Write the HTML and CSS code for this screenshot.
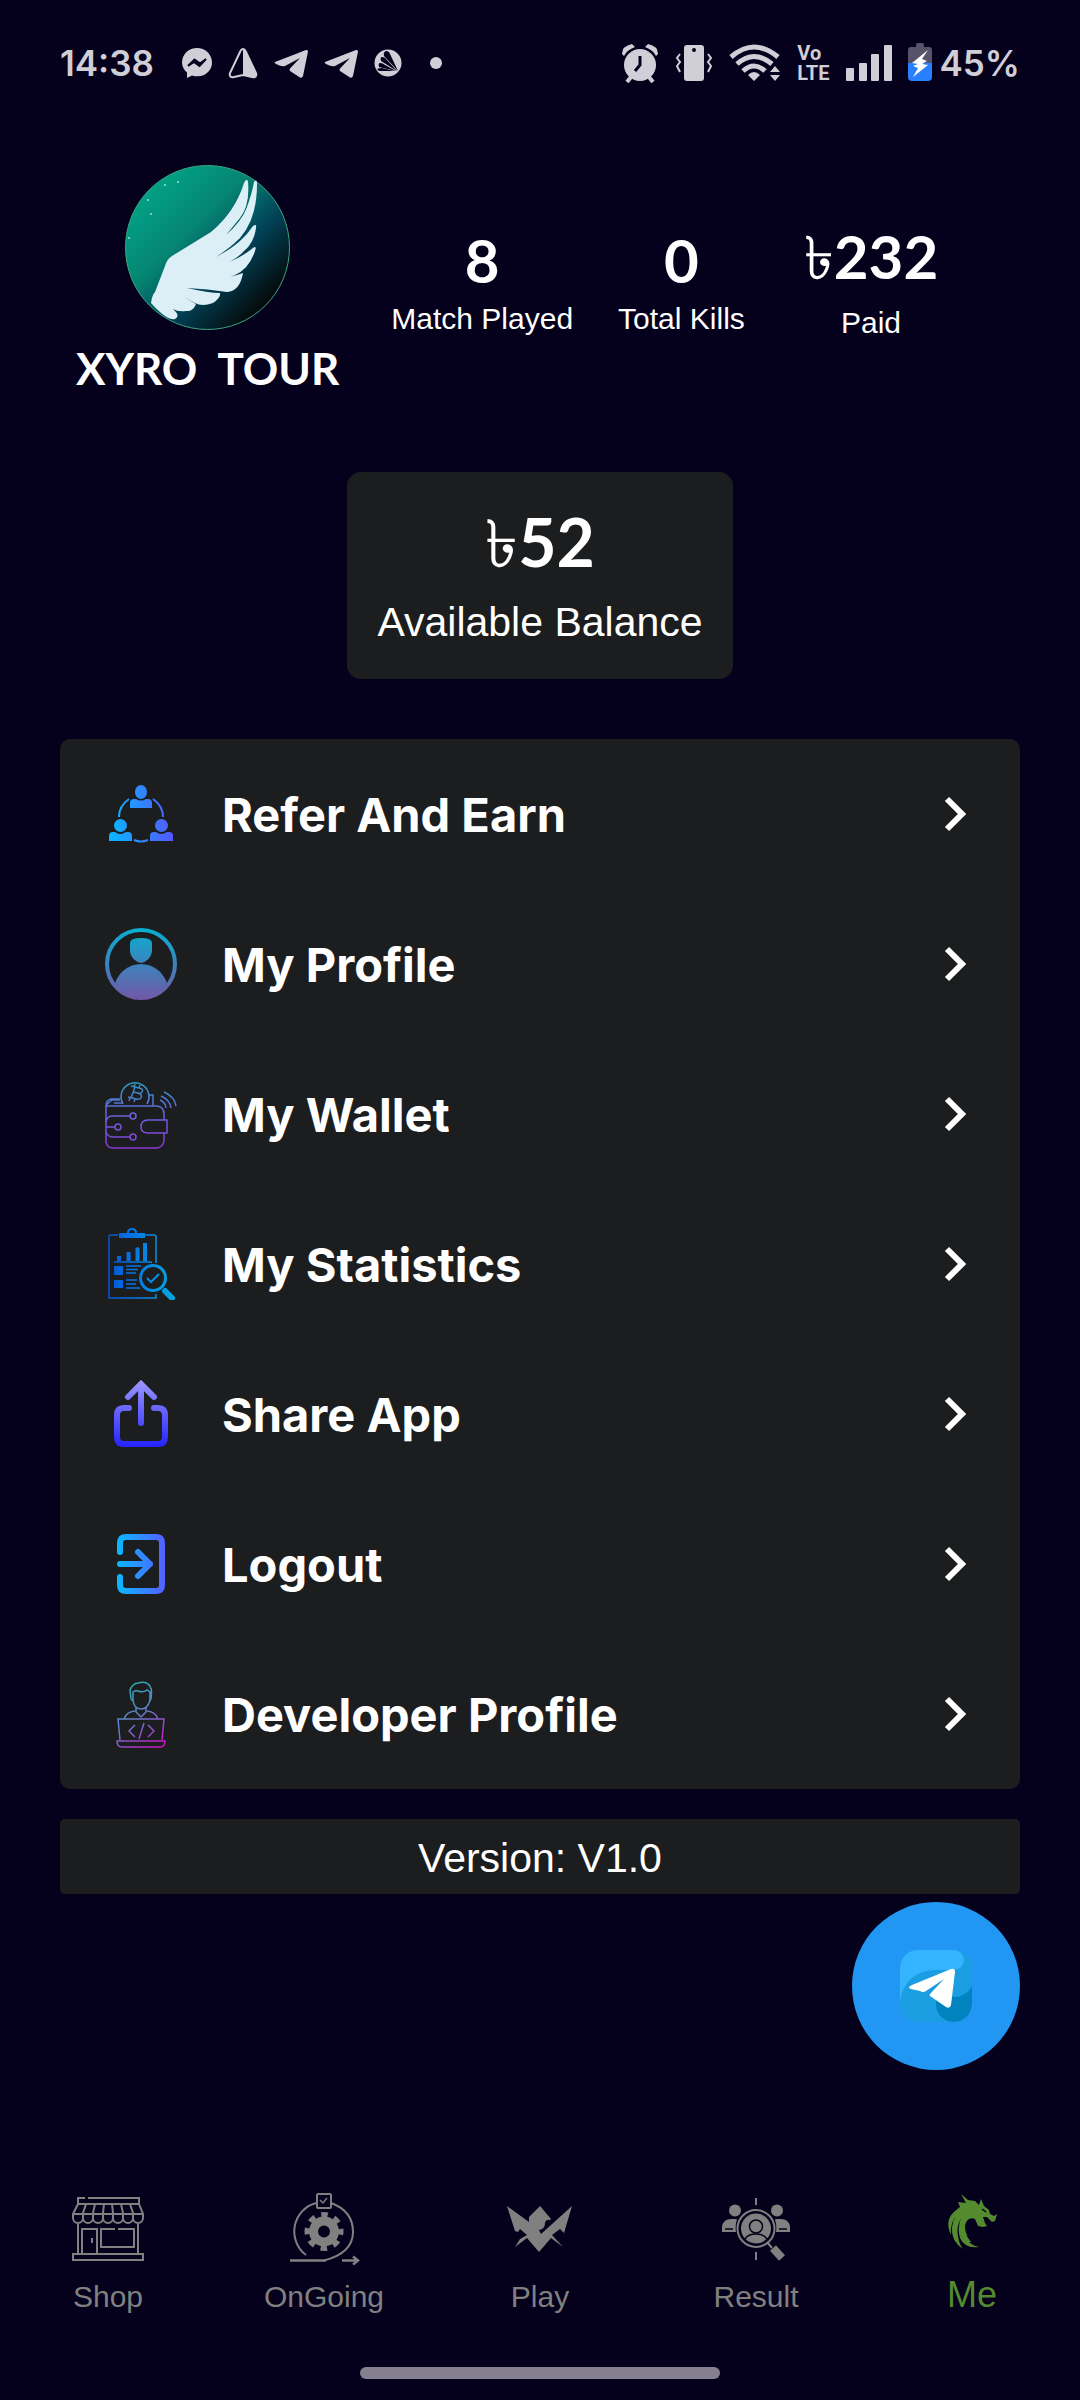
FILE: index.html
```
<!DOCTYPE html>
<html lang="en">

<head>
    <meta charset="UTF-8">
    <meta name="viewport" content="width=device-width, initial-scale=1.0">
    <title>Xyro Tour</title>
    <link rel="stylesheet" href="styles.css">
</head>

<body>
    <!-- Status bar -->
    <div class="status-bar">
        <div class="status-left">
            <span class="clock">14:38</span>
            <svg width="30" height="32" viewBox="0 0 30 32" fill="#d0ced6">
                <path d="M15 1C7 1 0 7 0 15.500c0 4 2 7.500 5 10V31l5-2.500c12 3.500 20-4.500 20-13C30 7 23 1 15 1z" />
                <path d="M6 19l6.500-6.500 5.500 4 6-4.500-6.500 7-5.500-4z" fill="#05001c" stroke="#05001c" stroke-width="2" />
            </svg>
            <svg width="30" height="32" viewBox="0 0 30 32">
                <path d="M15 2c2 0 2.500 2 3 3l10 21c1 3-1 5-4 4l-9-2-9 2c-3 1-5-1-4-4L12 5c.500-1 1-3 3-3z" fill="none" stroke="#d0ced6" stroke-width="2" />
                <path d="M15 2c2 0 2.500 2 3 3l10 21c1 3-1 5-4 4l-9-2z" fill="#d0ced6" />
            </svg>
            <svg width="34" height="32" viewBox="0 0 34 32" fill="#d0ced6">
                <path d="M1 15L32 3q2-.500 2 1.500L29 29q-1 2.500-3 1.500L16 24q-1-1 0-2.500L26 11 11 19q-3 1-9-2-2-1-1-2z" />
            </svg>
            <svg width="34" height="32" viewBox="0 0 34 32" fill="#d0ced6">
                <path d="M1 15L32 3q2-.500 2 1.500L29 29q-1 2.500-3 1.500L16 24q-1-1 0-2.500L26 11 11 19q-3 1-9-2-2-1-1-2z" />
            </svg>
            <svg width="28" height="32" viewBox="0 0 28 32">
                <circle cx="14" cy="16" r="13.500" fill="#d0ced6" />
                <g fill="#05001c">
                    <path d="M24 24L10 9q-1-4 2-5 3 0 4 3z" />
                    <path d="M23 24L7 14q-1-4 1-4 3 0 4 2z" />
                    <path d="M22 24L5 20q-1-4 1-4 3 0 5 2z" />
                    <path d="M20 24H5l-2-2q2-1 5-1z" />
                </g>
            </svg>
            <span class="dot"></span>
        </div>
        <div class="status-right">
            <svg width="38" height="40" viewBox="0 0 38 40">
                <g fill="#d0ced6">
                    <circle cx="19" cy="22" r="16" />
                    <path d="M1 11Q1 3 11 1L14 4Q6 7 3 13zM37 11Q37 3 27 1L24 4q8 3 11 9z" />
                </g>
                <path d="M10 34l-4 5M28 34l4 5" stroke="#d0ced6" stroke-width="4" />
                <path d="M19 13v9l-5 6" fill="none" stroke="#05001c" stroke-width="3" />
            </svg>
            <svg width="38" height="40" viewBox="0 0 38 40">
                <rect x="9" y="2" width="20" height="36" rx="3" fill="#d0ced6" />
                <circle cx="19" cy="7" r="2" fill="#05001c" />
                <path d="M5 11l-3 4 3 4-3 4 3 6M33 11l3 4-3 4 3 4-3 6" fill="none" stroke="#d0ced6" stroke-width="2" />
            </svg>
            <svg width="52" height="40" viewBox="0 0 52 40">
                <g fill="none" stroke="#d0ced6" stroke-width="5">
                    <path d="M2 14Q25-6 49 14" />
                    <path d="M8 21Q25 6 43 21" />
                    <path d="M14 28q11-10 22 0" />
                </g>
                <path d="M25 38l-6-6q6-6 12 0zM46 23l5 6H41zM46 38l5-6H41z" fill="#d0ced6" />
            </svg>
            <span class="volte"><span>Vo</span><span>LTE</span></span>
            <svg width="46" height="40" viewBox="0 0 46 40" fill="#d0ced6">
                <rect x="0" y="25" width="8" height="13" rx="1" />
                <rect x="13" y="20" width="8" height="18" rx="1" />
                <rect x="25" y="11" width="8" height="27" rx="1" />
                <rect x="38" y="2" width="8" height="36" rx="1" />
            </svg>
            <span class="battery">
                <svg width="24" height="40" viewBox="0 0 24 40">
                    <path d="M8 2q0-2 2-2h4q2 0 2 2v2h5q3 0 3 3v13H0V7q0-3 3-3h5z" fill="#56526a" />
                    <path d="M0 20h24v14q0 4-4 4H4q-4 0-4-4z" fill="#2980ff" />
                    <path d="M20 7L4 20l6 1-5 2 5 2-5 9 15-12-6-1 5-3-5-2z" fill="#fff" />
                </svg>
                45%
            </span>
        </div>
    </div>

    <!-- Player summary -->
    <header class="profile">
        <div class="player">
            <svg class="avatar" viewBox="0 0 165 165">
                <defs>
                    <linearGradient id="sky" x1="0.150" y1="0.150" x2="0.850" y2="0.850">
                        <stop offset="0" stop-color="#02a085" />
                        <stop offset="0.350" stop-color="#058573" />
                        <stop offset="0.650" stop-color="#024359" />
                        <stop offset="1" stop-color="#040a0b" />
                    </linearGradient>
                </defs>
                <circle cx="82.500" cy="82.500" r="82" fill="url(#sky)" stroke="#3aa57e" />
                <path fill="#dceff6" d="M26 138Q27 130 30 127L40 101Q42 94 47 91L86 67Q110 47 119 18Q122 12 123 17Q125 40 115 53L101 70Q117 56 122 42Q127 28 129 17Q132 13 132 19Q132 54 115 73Q105 83 91 92Q106 84 115 76Q122 70 128 61Q132 58 131 63Q129 78 119 86Q108 98 93 100Q112 96 128 83Q132 80 130 86Q124 104 110 110Q100 114 90 114Q104 113 118 108Q115 126 102 127Q83 124 62 123Q84 128 95 128Q96 133 88 138Q77 142 70 138L59 132L71 139Q68 147 61 146Q53 147 48 144Q56 151 50 154Q42 156 26 138z" />
                <g fill="#9fe0d2">
                    <circle cx="40" cy="20" r="1" />
                    <circle cx="53" cy="17" r="1" />
                    <circle cx="23" cy="35" r="1" />
                    <circle cx="26" cy="49" r="1" />
                    <circle cx="4" cy="73" r="1" />
                </g>
            </svg>
            <h1 class="player-name">XYRO  TOUR</h1>
        </div>
        <div class="stats">
            <div class="stat">
                <span class="stat-value">8</span>
                <span class="stat-label">Match Played</span>
            </div>
            <div class="stat">
                <span class="stat-value">0</span>
                <span class="stat-label">Total Kills</span>
            </div>
            <div class="stat stat-paid">
                <span class="stat-value"><span class="taka">৳</span>232</span>
                <span class="stat-label">Paid</span>
            </div>
        </div>
    </header>

    <!-- Balance -->
    <section class="balance">
        <span class="balance-value"><span class="taka">৳</span>52</span>
        <span class="balance-label">Available Balance</span>
    </section>

    <!-- Menu -->
    <nav class="menu">
        <a class="menu-item" href="#refer">
            <svg class="menu-icon" viewBox="0 0 72 72">
                <defs>
                    <linearGradient id="refer" gradientUnits="userSpaceOnUse" x1="4" y1="0" x2="68" y2="0">
                        <stop offset="0" stop-color="#08b8ff" />
                        <stop offset="1" stop-color="#5558ff" />
                    </linearGradient>
                </defs>
                <g fill="url(#refer)">
                    <ellipse cx="36" cy="14" rx="6" ry="7" />
                    <path d="M25 30v-5q0-4 4-4h2q5 3 10 0h2q4 0 4 4v5z" />
                    <circle cx="15.500" cy="47.500" r="6.500" />
                    <path d="M4 63v-5q0-4 4-4h2q5 4 11 0h2q4 0 4 4v5z" />
                    <circle cx="56.500" cy="47.500" r="6.500" />
                    <path d="M45 63v-5q0-4 4-4h2q5 4 11 0h2q4 0 4 4v5z" />
                </g>
                <path d="M24 21Q14 28 14 39M48 21q10 7 10 18M29 62q7 3 14 0" fill="none" stroke="url(#refer)" stroke-width="2" />
            </svg>
            <span class="menu-label">Refer And Earn</span>
            <svg class="chevron" viewBox="0 0 24 36"><path d="M3 3l15 15L3 33" /></svg>
        </a>
        <a class="menu-item" href="#profile">
            <svg class="menu-icon" viewBox="0 0 72 72">
                <defs>
                    <linearGradient id="user" gradientUnits="userSpaceOnUse" x1="0" y1="0" x2="0" y2="72">
                        <stop offset="0" stop-color="#05b0d2" />
                        <stop offset="1" stop-color="#7357a6" />
                    </linearGradient>
                </defs>
                <circle cx="36" cy="36" r="34" fill="none" stroke="url(#user)" stroke-width="4" />
                <path d="M25 15q0-5 11-5t11 5v9q-2 9-11 11-9-2-11-11z" fill="url(#user)" />
                <path d="M10 55q7-18 26-19 19 1 26 19-11 16-26 16T10 55z" fill="url(#user)" />
            </svg>
            <span class="menu-label">My Profile</span>
            <svg class="chevron" viewBox="0 0 24 36"><path d="M3 3l15 15L3 33" /></svg>
        </a>
        <a class="menu-item" href="#wallet">
            <svg class="menu-icon" viewBox="0 0 72 72">
                <defs>
                    <linearGradient id="wallet" gradientUnits="userSpaceOnUse" x1="0" y1="0" x2="0" y2="72">
                        <stop offset="0" stop-color="#229db8" />
                        <stop offset="0.500" stop-color="#6a63dd" />
                        <stop offset="1" stop-color="#8c35d9" />
                    </linearGradient>
                </defs>
                <g fill="none" stroke="url(#wallet)" stroke-width="1.500">
                    <path d="M18 26A14 14 0 1 1 42 26" />
                    <path d="M26 8l8 2q5 1 3 4-1 2-5 1 6 1 4 5-1 2-5 1l-8-2M30 9l-4 11M28 14l5 1M30 6l-1 3M35 7l-1 3M25 20l-1 3M30 21l-1 3" />
                    <path d="M15 21H6Q1 22 1 28v36q1 6 7 6h44q6-1 7-7v-8M1 28h51q7 1 7 8v6M1 27l6-5h8M43 17h5v11M9 25h8" />
                    <path d="M62 42H43q-7 0-7 7 0 6 7 6h19z" />
                    <path d="M1 44q1-6 6-6h18M1 49h9M1 54q2 5 7 5h17" />
                    <circle cx="28" cy="38" r="3" />
                    <circle cx="13" cy="49" r="3" />
                    <circle cx="28" cy="59" r="3" />
                    <path d="M55 22q6 3 6 8M56 18q9 4 10 12M59 14q11 5 12 14" />
                </g>
            </svg>
            <span class="menu-label">My Wallet</span>
            <svg class="chevron" viewBox="0 0 24 36"><path d="M3 3l15 15L3 33" /></svg>
        </a>
        <a class="menu-item" href="#statistics">
            <svg class="menu-icon" viewBox="0 0 72 72">
                <defs>
                    <linearGradient id="chart" gradientUnits="userSpaceOnUse" x1="4" y1="0" x2="68" y2="0">
                        <stop offset="0" stop-color="#0755d0" />
                        <stop offset="0.300" stop-color="#046fe5" />
                        <stop offset="1" stop-color="#05a6dc" />
                    </linearGradient>
                </defs>
                <g fill="none" stroke="url(#chart)">
                    <path d="M13 7H6Q4 7 4 9v61h47v-4M40 7h9q2 0 2 2v26" stroke-width="1.500" />
                    <path d="M9 34h37l1 .500" stroke-width="1.500" />
                    <path d="M14 33v-5M23.500 33v-9M32.500 33V19.500M40 33V15" stroke-width="4" />
                    <path d="M21 38h15M21 41.500h12M21 45h10M21 52h11M21 56h10M21 60h14" stroke-width="1.500" />
                    <circle cx="48" cy="50" r="12.500" stroke-width="3" />
                    <path d="M42 50l4 4 8-8" stroke-width="2" />
                    <path d="M23 5q0-4 4-4t4 4" stroke-width="2" />
                    <path d="M60 63l7 7" stroke-width="6" stroke-linecap="round" />
                </g>
                <path d="M14 5h26v5H14zM9 38h9v9H9zM9 52h9v8H9z" fill="url(#chart)" />
            </svg>
            <span class="menu-label">My Statistics</span>
            <svg class="chevron" viewBox="0 0 24 36"><path d="M3 3l15 15L3 33" /></svg>
        </a>
        <a class="menu-item" href="#share">
            <svg class="menu-icon" viewBox="0 0 72 72">
                <defs>
                    <linearGradient id="share" gradientUnits="userSpaceOnUse" x1="0" y1="0" x2="0" y2="68">
                        <stop offset="0" stop-color="#a09cfd" />
                        <stop offset="1" stop-color="#2525ff" />
                    </linearGradient>
                </defs>
                <path d="M36 7v38M23 19L36 6l13 13M24 30H19q-7 0-7 7v22q0 7 7 7h34q7 0 7-7V37q0-7-7-7h-4" fill="none" stroke="url(#share)" stroke-width="6" stroke-linecap="round" />
            </svg>
            <span class="menu-label">Share App</span>
            <svg class="chevron" viewBox="0 0 24 36"><path d="M3 3l15 15L3 33" /></svg>
        </a>
        <a class="menu-item" href="#logout">
            <svg class="menu-icon" viewBox="0 0 72 72">
                <defs>
                    <linearGradient id="logout" gradientUnits="userSpaceOnUse" x1="12" y1="0" x2="60" y2="0">
                        <stop offset="0" stop-color="#0ab8ff" />
                        <stop offset="1" stop-color="#5560ff" />
                    </linearGradient>
                </defs>
                <path d="M15 24V15q0-6 6-6h30q6 0 6 6v42q0 6-6 6H21q-6 0-6-6v-8M15 36h30M33 24l12 12-12 12" fill="none" stroke="url(#logout)" stroke-width="6" stroke-linecap="round" stroke-linejoin="round" />
            </svg>
            <span class="menu-label">Logout</span>
            <svg class="chevron" viewBox="0 0 24 36"><path d="M3 3l15 15L3 33" /></svg>
        </a>
        <a class="menu-item" href="#developer">
            <svg class="menu-icon" viewBox="0 0 72 72">
                <defs>
                    <linearGradient id="dev" gradientUnits="userSpaceOnUse" x1="20" y1="8" x2="58" y2="68">
                        <stop offset="0" stop-color="#22b0b4" />
                        <stop offset="0.500" stop-color="#6a78c8" />
                        <stop offset="1" stop-color="#d010c8" />
                    </linearGradient>
                </defs>
                <g fill="none" stroke="url(#dev)" stroke-width="1.500">
                    <path d="M26 21l-1-9q2-6 8-7 7-2 10 1 5 3 3 15M28 22v-8q3-2 5-1 5 2 9-1l3 2v8q-2 9-9 9t-8-9zM26 21l2 2M46 21l-1 2" />
                    <path d="M31 29v5l5 5 5-5v-5M30 33q-9 1-11 8M42 33q9 1 11 8" />
                    <path d="M15 62L13 41h46l-2 21M12 63h48q0 6-5 6H17q-5 0-5-6z" />
                    <path d="M30 47l-6 6 6 6M43 47l6 6-6 6M39 45l-5 16" />
                </g>
            </svg>
            <span class="menu-label">Developer Profile</span>
            <svg class="chevron" viewBox="0 0 24 36"><path d="M3 3l15 15L3 33" /></svg>
        </a>
    </nav>

    <p class="version">Version: V1.0</p>

    <!-- Support chat -->
    <a class="support" href="#telegram" aria-label="Telegram">
        <svg width="72" height="72" viewBox="0 0 72 72">
            <defs>
                <clipPath id="tile"><rect width="72" height="72" rx="18" /></clipPath>
            </defs>
            <g clip-path="url(#tile)">
                <rect width="72" height="72" fill="#1b9de2" />
                <path d="M36 54V36h36v18a18 18 0 0 1-36 0z" fill="#0083bf" />
                <path d="M72 0v18a18 18 0 0 1-36 18V0z" fill="#1b9de2" />
                <path d="M0 52V0h54a10 10 0 0 1 0 20H34Q4 22 0 52z" fill="#34b3ff" />
            </g>
            <path d="M9 38q0-2 3-3l39-16q4-1 4 3l-4 33q-1 4-5 2L30 46q-1-1 0-2l14-15-18 12q-3 2-6 0l-9-2q-2-1-2-1z" fill="#fff" />
        </svg>
    </a>

    <!-- Bottom tabs -->
    <nav class="tabs">
        <a class="tab" href="#shop">
            <svg class="tab-icon" viewBox="0 0 72 72" fill="none" stroke="currentColor" stroke-width="2">
                <path d="M13 5H6v6M16 5h51v6M6 11h61l4 10v4M6 11L1 21v4M1 21h70" />
                <path d="M1 25a5 5 0 0 0 10 0a5 5 0 0 0 10 0a5 5 0 0 0 10 0a5 5 0 0 0 10 0a5 5 0 0 0 10 0a5 5 0 0 0 10 0a5 5 0 0 0 10 0" />
                <path d="M11 26v-6l3-9M21 26v-6l2-9M31 26v-6l1-9M41 26v-6l-1-9M51 26v-6l-2-9M61 26v-6l-3-9" />
                <path d="M6 31v29M66 31v29M10 60V36h15v24M20 45v5M43 36H29v18h33V36H46" />
                <rect x="1" y="61" width="70" height="6" />
            </svg>
            <span>Shop</span>
        </a>
        <a class="tab" href="#ongoing">
            <svg class="tab-icon" viewBox="0 0 72 72" fill="none" stroke="currentColor" stroke-width="2">
                <path d="M18 62A29.500 29.500 0 0 1 28 10M43 10Q65 18 65 39T36 67.500" />
                <path d="M2 67.500h36M54 67.500h15M65 63.500l5 4-5 4" stroke-width="2.500" />
                <rect x="29" y="1" width="14" height="14" rx="1" />
                <path d="M32 7l3 3 4-5" stroke-width="1.500" />
                <circle cx="36" cy="38.500" r="10.500" stroke-width="9" />
                <circle cx="36" cy="38.500" r="16.500" stroke-width="6" stroke-dasharray="6.480 6.480" stroke-dashoffset="3.240" />
            </svg>
            <span>OnGoing</span>
        </a>
        <a class="tab" href="#play">
            <svg class="tab-icon" viewBox="0 0 72 72" fill="currentColor">
                <path d="M3 13l22 16v-5l11-11 11 13-3 4 2-3q-4-1-5 3 0 6-6 7l2 4 31-28-8 27-4-4-8 6 11 12-12-9-12 14-12-14-12 9 5-8 7-4-7-6-2 3-3-1z" />
            </svg>
            <span>Play</span>
        </a>
        <a class="tab" href="#result">
            <svg class="tab-icon" viewBox="0 0 72 72" fill="currentColor">
                <circle cx="15" cy="17.500" r="6" />
                <circle cx="57" cy="17.500" r="6" />
                <path d="M2 39v-5q1-8 9-8h6q-2 7-1 13zM70 39v-5q-1-8-9-8h-6q2 7 1 13z" />
                <path d="M5 36h8M59 36h8" stroke="#05001c" stroke-width="1.500" />
                <path d="M36 5v7M36 59v8M47 49l5 6" stroke="currentColor" stroke-width="2" />
                <circle cx="36" cy="35.500" r="18.500" fill="none" stroke="currentColor" stroke-width="2" />
                <circle cx="36" cy="35.500" r="15" />
                <circle cx="36" cy="33.500" r="6.500" stroke="#05001c" stroke-width="1.500" />
                <path d="M25 46q3-5 11-5t11 5" fill="none" stroke="#05001c" stroke-width="1.500" />
                <path d="M53 55l9 10" stroke="currentColor" stroke-width="8" />
            </svg>
            <span>Result</span>
        </a>
        <a class="tab tab-active" href="#me">
            <svg class="tab-icon" viewBox="0 0 72 72" fill="currentColor">
                <path d="M25 1l7 6 7 1 4 4 2-6 3 7 5 4 1 4 4 2 3-2-2 7-3 1-5-5h-4l2 6 2 3-4 1-5-1-3-7q-8-3-10 7 0 7 3 10l-2-1 5 7-2 0q4 4 10 5-14 2-19-9-3-9 1-20-5 10-3 18 1 8 5 13-12-8-11-21 1-9 5-12-7 5-6 19-7-15 4-24l5-4-2-5 8 1z" />
                <path d="M46 16l4 3M49 29l3-2" stroke="#05001c" stroke-width="1.500" />
            </svg>
            <span>Me</span>
        </a>
    </nav>
    <div class="home-bar"></div>
</body>

</html>
```
FILE: styles.css
```
* {
    box-sizing: border-box;
}

body {
    margin: 0;
    min-height: 100vh;
    display: flex;
    flex-direction: column;
    background-color: #05001c;
    color: #fff;
    font-family: "Liberation Sans", Arial, sans-serif;
}

a {
    color: inherit;
    text-decoration: none;
}

svg {
    display: block;
    flex-shrink: 0;
}

/* Status bar */
.status-bar {
    display: flex;
    justify-content: space-between;
    height: 84px;
    padding: 41px 60px 0;
    color: #d0ced6;
    font-family: Inter, sans-serif;
    font-size: 35px;
    font-weight: 600;
    line-height: 40px;
}

.status-left,
.status-right {
    display: flex;
    align-items: center;
    gap: 16px;
}

.clock {
    margin-right: 12px;
}

.dot {
    width: 12px;
    height: 12px;
    margin-left: 12px;
    border-radius: 50%;
    background-color: #d0ced6;
}

.volte {
    display: flex;
    flex-direction: column;
    font-family: Roboto, sans-serif;
    font-size: 20px;
    font-weight: 700;
    line-height: 20px;
}

.battery {
    display: flex;
    align-items: center;
    gap: 8px;
}

/* Player summary */
.profile {
    display: flex;
    align-items: flex-start;
    padding: 81px 76px 0;
}

.player {
    display: flex;
    flex-direction: column;
    align-items: center;
}

.avatar {
    width: 165px;
    height: 165px;
}

.player-name {
    margin: 10px 0 0;
    font-family: Lato, sans-serif;
    font-size: 44px;
    font-weight: 700;
    line-height: 56px;
    white-space: pre;
}

.stats {
    display: flex;
    gap: 45px;
    margin: 59px 0 0 52px;
}

.stat {
    display: flex;
    flex-direction: column;
    align-items: center;
    gap: 4px;
}

/* the taka sign sits a little higher than the plain counters */
.stat-paid {
    gap: 16px;
    padding-left: 14px;
}

.stat-paid .stat-value {
    line-height: 64px;
}

.stat-value {
    font-family: Lato, sans-serif;
    font-size: 60px;
    font-weight: 700;
    line-height: 72px;
}

.stat-label {
    font-size: 30px;
    line-height: 38px;
}

.taka {
    font-weight: 500;
}

/* Balance */
.balance {
    display: flex;
    flex-direction: column;
    align-items: center;
    align-self: center;
    gap: 6px;
    margin-top: 76px;
    padding: 26px 30px 27px;
    border-radius: 14px;
    background-color: #1c1d1e;
}

.balance-value {
    font-family: Lato, sans-serif;
    font-size: 66px;
    font-weight: 700;
    line-height: 88px;
}

.balance-label {
    font-size: 41px;
    line-height: 60px;
}

/* Menu */
.menu {
    margin: 60px 60px 0;
    border-radius: 10px;
    background-color: #1c1d1e;
}

.menu-item {
    display: flex;
    align-items: center;
    height: 150px;
    padding: 0 52px 0 45px;
}

.menu-icon {
    width: 72px;
    height: 72px;
}

.menu-label {
    flex: 1;
    padding-left: 45px;
    font-family: Inter, sans-serif;
    font-size: 47px;
    font-weight: 700;
}

.chevron {
    width: 24px;
    height: 36px;
    fill: none;
    stroke: #fff;
    stroke-width: 6px;
}

.version {
    margin: 30px 60px 0;
    padding-top: 3px;
    border-radius: 5px;
    background-color: #1c1d1e;
    font-size: 41px;
    line-height: 72px;
    text-align: center;
}

.support {
    display: flex;
    align-items: center;
    justify-content: center;
    align-self: flex-end;
    width: 168px;
    height: 168px;
    margin: 8px 60px 0;
    border-radius: 50%;
    background-color: #2196f3;
}

/* Bottom tabs */
.tabs {
    display: flex;
    margin-top: auto;
    color: #808080;
}

.tab {
    flex: 1;
    display: flex;
    flex-direction: column;
    align-items: center;
    gap: 12px;
    font-size: 30px;
    line-height: 40px;
}

.tab-icon {
    width: 72px;
    height: 72px;
}

.tab-active {
    color: #558b2f;
    font-size: 36px;
    line-height: 36px;
}

.home-bar {
    width: 33.333%;
    height: 12px;
    margin: 50px auto 21px;
    border-radius: 6px;
    background-color: #84808f;
}
```
